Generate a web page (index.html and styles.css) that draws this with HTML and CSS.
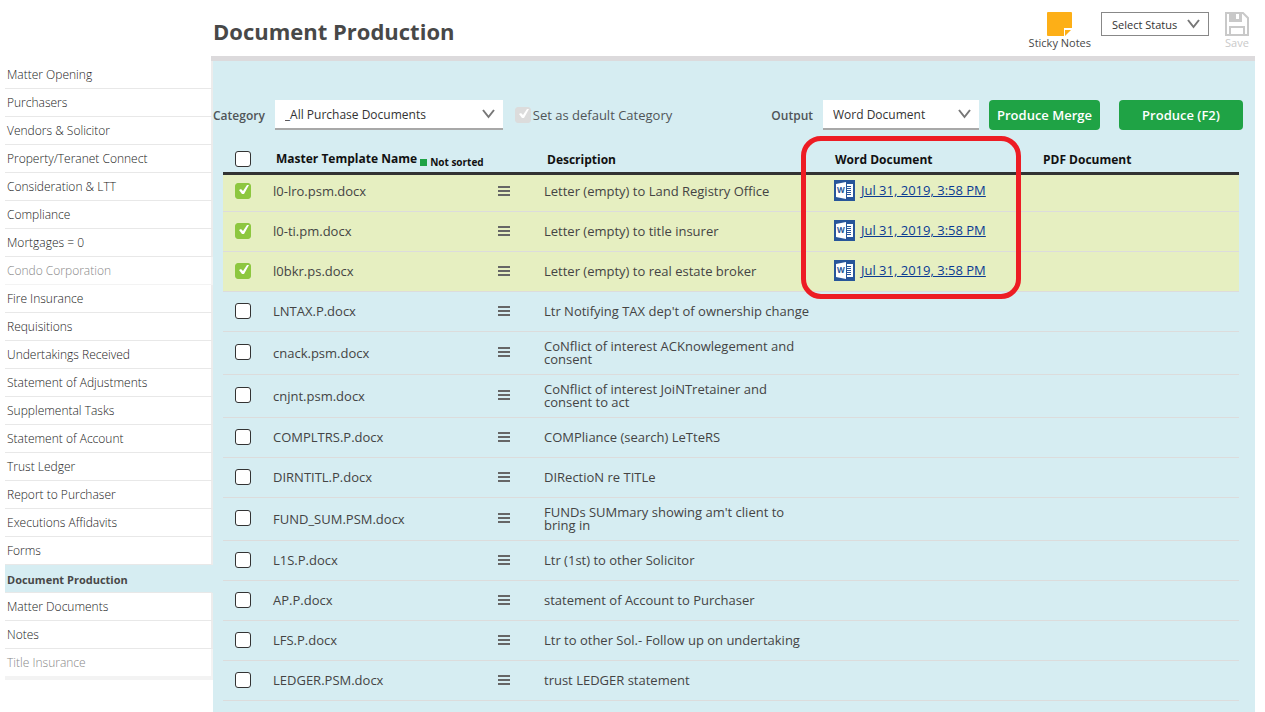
FILE: index.html
```
<!DOCTYPE html>
<html lang="en">

<head>
    <meta charset="UTF-8" />
    <meta name="viewport" content="width=device-width, initial-scale=1.0" />
    <title>Document Production</title>
    <link rel="stylesheet" href="styles.css">
</head>

<body>

    <svg class="sprite" aria-hidden="true">
        <symbol id="icon-menu" viewBox="0 0 12 10">
            <path d="M0 0h12v2H0zM0 4h12v2H0zM0 8h12v2H0z" fill="#666" />
        </symbol>
        <symbol id="icon-word" viewBox="0 0 21 21">
            <path d="M0 0h21v21H0z" fill="#28569a" />
            <path d="M11 4h8v13h-8z" fill="#fff" />
            <path d="M12 6.500h5M12 8.500h5M12 10.500h5M12 12.500h5M12 14.500h5" stroke="#28569a" />
            <path d="M2 4l10-2v17l-10-2z" fill="#fff" />
            <path d="M12.500 4v13" stroke="#28569a" />
            <text x="3" y="13" class="word-letter">W</text>
        </symbol>
    </svg>

    <header class="top">
        <h1 class="title">Document Production</h1>
        <div class="tools">
            <button type="button" class="tool">
                <svg width="25" height="24" viewBox="0 0 25 24" aria-hidden="true">
                    <path d="M1 0h23q1 0 1 1v15h-8v8H1q-1 0-1-1V1q0-1 1-1z" fill="#fdaf17" />
                    <path d="M18 18h6l-6 6z" fill="#fdaf17" />
                </svg>
                Sticky Notes
            </button>
            <select class="status" aria-label="Status">
                <option>Select Status</option>
            </select>
            <button type="button" class="tool tool-save" disabled>
                <svg width="24" height="24" viewBox="0 0 24 24" fill="none" stroke="#c9c9c9" stroke-width="2" aria-hidden="true">
                    <path d="M1 1h17l5 5v17H1z" />
                    <path d="M5 23v-8h14v8" />
                    <path d="M4 0h13v10H4zM11 2v5h3V2z" fill="#c9c9c9" fill-rule="evenodd" stroke="none" />
                </svg>
                Save
            </button>
        </div>
    </header>

    <div class="layout">
        <nav class="side">
            <a href="#">Matter Opening</a>
            <a href="#">Purchasers</a>
            <a href="#">Vendors &amp; Solicitor</a>
            <a href="#">Property/Teranet Connect</a>
            <a href="#">Consideration &amp; LTT</a>
            <a href="#">Compliance</a>
            <a href="#">Mortgages = 0</a>
            <a href="#" class="off">Condo Corporation</a>
            <a href="#">Fire Insurance</a>
            <a href="#">Requisitions</a>
            <a href="#">Undertakings Received</a>
            <a href="#">Statement of Adjustments</a>
            <a href="#">Supplemental Tasks</a>
            <a href="#">Statement of Account</a>
            <a href="#">Trust Ledger</a>
            <a href="#">Report to Purchaser</a>
            <a href="#">Executions Affidavits</a>
            <a href="#">Forms</a>
            <a href="#" class="active">Document Production</a>
            <a href="#">Matter Documents</a>
            <a href="#">Notes</a>
            <a href="#" class="off">Title Insurance</a>
        </nav>

        <main class="panel">
            <form class="controls">
                <label for="category" class="control-label">Category</label>
                <select id="category" class="drop drop-category">
                    <option>_All Purchase Documents</option>
                </select>
                <input type="checkbox" id="default-cat" class="check" checked disabled>
                <label for="default-cat" class="check-label">Set as default Category</label>
                <label for="output" class="control-label control-output">Output</label>
                <select id="output" class="drop drop-output">
                    <option>Word Document</option>
                </select>
                <button type="button" class="bttn">Produce Merge</button>
                <button type="button" class="bttn bttn-wide">Produce (F2)</button>
            </form>

            <div class="table-wrap">
                <table class="docs">
                    <colgroup>
                        <col class="col-check">
                        <col class="col-name">
                        <col class="col-menu">
                        <col class="col-desc">
                        <col class="col-word">
                        <col>
                    </colgroup>
                    <thead>
                        <tr>
                            <th><input type="checkbox" class="check" aria-label="Select all"></th>
                            <th colspan="2">Master Template Name <span class="sort">Not sorted</span></th>
                            <th>Description</th>
                            <th class="word-head">Word Document</th>
                            <th>PDF Document</th>
                        </tr>
                    </thead>
                    <tbody>
                        <tr class="picked">
                            <td><input type="checkbox" class="check" aria-label="l0-lro.psm.docx" checked></td>
                            <td>l0-lro.psm.docx</td>
                            <td><button type="button" class="menu" aria-label="Menu"><svg width="12" height="10"><use href="#icon-menu" /></svg></button></td>
                            <td>Letter (empty) to Land Registry Office</td>
                            <td><a href="#" class="doc"><svg width="21" height="21"><use href="#icon-word" /></svg><span>Jul 31, 2019, 3:58 PM</span></a></td>
                            <td></td>
                        </tr>
                        <tr class="picked">
                            <td><input type="checkbox" class="check" aria-label="l0-ti.pm.docx" checked></td>
                            <td>l0-ti.pm.docx</td>
                            <td><button type="button" class="menu" aria-label="Menu"><svg width="12" height="10"><use href="#icon-menu" /></svg></button></td>
                            <td>Letter (empty) to title insurer</td>
                            <td><a href="#" class="doc"><svg width="21" height="21"><use href="#icon-word" /></svg><span>Jul 31, 2019, 3:58 PM</span></a></td>
                            <td></td>
                        </tr>
                        <tr class="picked">
                            <td><input type="checkbox" class="check" aria-label="l0bkr.ps.docx" checked></td>
                            <td>l0bkr.ps.docx</td>
                            <td><button type="button" class="menu" aria-label="Menu"><svg width="12" height="10"><use href="#icon-menu" /></svg></button></td>
                            <td>Letter (empty) to real estate broker</td>
                            <td><a href="#" class="doc"><svg width="21" height="21"><use href="#icon-word" /></svg><span>Jul 31, 2019, 3:58 PM</span></a></td>
                            <td></td>
                        </tr>
                        <tr>
                            <td><input type="checkbox" class="check" aria-label="LNTAX.P.docx"></td>
                            <td>LNTAX.P.docx</td>
                            <td><button type="button" class="menu" aria-label="Menu"><svg width="12" height="10"><use href="#icon-menu" /></svg></button></td>
                            <td>Ltr Notifying TAX dep't of ownership change</td>
                            <td></td>
                            <td></td>
                        </tr>
                        <tr>
                            <td><input type="checkbox" class="check" aria-label="cnack.psm.docx"></td>
                            <td>cnack.psm.docx</td>
                            <td><button type="button" class="menu" aria-label="Menu"><svg width="12" height="10"><use href="#icon-menu" /></svg></button></td>
                            <td>CoNflict of interest ACKnowlegement and consent</td>
                            <td></td>
                            <td></td>
                        </tr>
                        <tr>
                            <td><input type="checkbox" class="check" aria-label="cnjnt.psm.docx"></td>
                            <td>cnjnt.psm.docx</td>
                            <td><button type="button" class="menu" aria-label="Menu"><svg width="12" height="10"><use href="#icon-menu" /></svg></button></td>
                            <td>CoNflict of interest JoiNTretainer and consent to act</td>
                            <td></td>
                            <td></td>
                        </tr>
                        <tr>
                            <td><input type="checkbox" class="check" aria-label="COMPLTRS.P.docx"></td>
                            <td>COMPLTRS.P.docx</td>
                            <td><button type="button" class="menu" aria-label="Menu"><svg width="12" height="10"><use href="#icon-menu" /></svg></button></td>
                            <td>COMPliance (search) LeTteRS</td>
                            <td></td>
                            <td></td>
                        </tr>
                        <tr>
                            <td><input type="checkbox" class="check" aria-label="DIRNTITL.P.docx"></td>
                            <td>DIRNTITL.P.docx</td>
                            <td><button type="button" class="menu" aria-label="Menu"><svg width="12" height="10"><use href="#icon-menu" /></svg></button></td>
                            <td>DIRectioN re TITLe</td>
                            <td></td>
                            <td></td>
                        </tr>
                        <tr>
                            <td><input type="checkbox" class="check" aria-label="FUND_SUM.PSM.docx"></td>
                            <td>FUND_SUM.PSM.docx</td>
                            <td><button type="button" class="menu" aria-label="Menu"><svg width="12" height="10"><use href="#icon-menu" /></svg></button></td>
                            <td>FUNDs SUMmary showing am't client to bring in</td>
                            <td></td>
                            <td></td>
                        </tr>
                        <tr>
                            <td><input type="checkbox" class="check" aria-label="L1S.P.docx"></td>
                            <td>L1S.P.docx</td>
                            <td><button type="button" class="menu" aria-label="Menu"><svg width="12" height="10"><use href="#icon-menu" /></svg></button></td>
                            <td>Ltr (1st) to other Solicitor</td>
                            <td></td>
                            <td></td>
                        </tr>
                        <tr>
                            <td><input type="checkbox" class="check" aria-label="AP.P.docx"></td>
                            <td>AP.P.docx</td>
                            <td><button type="button" class="menu" aria-label="Menu"><svg width="12" height="10"><use href="#icon-menu" /></svg></button></td>
                            <td>statement of Account to Purchaser</td>
                            <td></td>
                            <td></td>
                        </tr>
                        <tr>
                            <td><input type="checkbox" class="check" aria-label="LFS.P.docx"></td>
                            <td>LFS.P.docx</td>
                            <td><button type="button" class="menu" aria-label="Menu"><svg width="12" height="10"><use href="#icon-menu" /></svg></button></td>
                            <td>Ltr to other Sol.- Follow up on undertaking</td>
                            <td></td>
                            <td></td>
                        </tr>
                        <tr>
                            <td><input type="checkbox" class="check" aria-label="LEDGER.PSM.docx"></td>
                            <td>LEDGER.PSM.docx</td>
                            <td><button type="button" class="menu" aria-label="Menu"><svg width="12" height="10"><use href="#icon-menu" /></svg></button></td>
                            <td>trust LEDGER statement</td>
                            <td></td>
                            <td></td>
                        </tr>
                    </tbody>
                </table>
                <div class="highlight"></div>
            </div>
        </main>
    </div>

</body>

</html>
```
FILE: styles.css
```
* {
    box-sizing: border-box;
}

body {
    margin: 0;
    min-height: 100vh;
    display: flex;
    flex-direction: column;
    background-color: #fff;
    color: #444;
    font-family: "Open Sans", sans-serif;
    font-size: 13px;
}

button,
select,
input {
    font-family: inherit;
    margin: 0;
}

.sprite {
    display: none;
}

/* header */

.top {
    display: flex;
    justify-content: space-between;
    height: 61px;
    margin: 0 10px 0 211px;
    padding: 12px 6px 0 2px;
    border-bottom: 5px solid #dcdadc;
}

.title {
    margin: 0;
    font-size: 22px;
    line-height: 38px;
    font-weight: 700;
    color: #484848;
}

.tools {
    display: flex;
    align-items: flex-start;
    gap: 10px;
}

.tool {
    display: flex;
    flex-direction: column;
    align-items: center;
    padding: 0;
    border: 0;
    background: none;
    font-size: 11px;
    line-height: 14px;
    color: #484848;
}

.tool-save {
    margin-left: 6px;
    color: #c9c9c9;
}

.status,
.drop {
    appearance: none;
    border-radius: 0;
    color: #333;
    background: #fff url("data:image/svg+xml,%3Csvg xmlns='http://www.w3.org/2000/svg' width='13' height='10'%3E%3Cpath d='M1 1l5.500 7 5.500-7' fill='none' stroke='%23777' stroke-width='2'/%3E%3C/svg%3E") no-repeat right 8px center;
}

.status {
    width: 108px;
    height: 24px;
    padding: 0 10px;
    border: 1px solid #888;
    font-size: 11px;
}

/* side menu */

.layout {
    display: flex;
    flex: 1;
    padding: 0 10px 0 5px;
}

.side {
    width: 208px;
    flex-shrink: 0;
}

.side a {
    display: block;
    height: 28px;
    padding-left: 2px;
    border-right: 2px solid #ececec;
    border-bottom: 1px solid #e8e8e8;
    font-size: 12px;
    line-height: 28px;
    font-weight: 300;
    color: #222;
    text-decoration: none;
}

.side .off {
    color: #888;
    border-color: #f3f3f3;
}

.side .active {
    background-color: #d6edf2;
    border-right-color: #d6edf2;
    font-size: 11px;
    line-height: 30px;
    font-weight: 700;
    color: #484848;
}

.side a:last-child {
    height: 31px;
    border-bottom-width: 4px;
}

/* panel */

.panel {
    flex: 1;
    min-width: 0;
    padding-top: 39px;
    background-color: #d6edf2;
}

.controls {
    display: flex;
    align-items: center;
    height: 30px;
    padding-right: 12px;
}

.control-label {
    margin-right: 10px;
    font-size: 12px;
    font-weight: 600;
    color: #505558;
}

.control-output {
    margin-left: auto;
}

.drop {
    height: 30px;
    padding: 0 10px;
    border: 0;
    border-bottom: 2px solid #a8a8a8;
    font-size: 12px;
}

.drop-category {
    width: 228px;
    margin-right: 12px;
}

.drop-output {
    width: 156px;
    margin-right: 10px;
}

.check-label {
    margin-left: 2px;
    color: #505558;
}

.check {
    appearance: none;
    display: block;
    width: 16px;
    height: 16px;
    border: 1px solid #333;
    border-radius: 3px;
    background-color: #fff;
}

.check:checked {
    border-color: #8dc73f;
    background: #8dc73f url("data:image/svg+xml,%3Csvg xmlns='http://www.w3.org/2000/svg' width='14' height='14'%3E%3Cpath d='M3 6l2-1 2 2 4-6h2L8 10H6z' fill='%23fff'/%3E%3C/svg%3E") no-repeat center;
}

.check:disabled {
    border-color: #dcdcdc;
    background-color: #dcdcdc;
}

.bttn {
    height: 30px;
    width: 111px;
    padding: 0;
    border: 0;
    border-radius: 4px;
    background-color: #1fa345;
    color: #fff;
    font-size: 13px;
    font-weight: 600;
}

.bttn-wide {
    width: 124px;
    margin-left: 19px;
}

/* documents */

.table-wrap {
    position: relative;
    margin: 14px 16px 0 10px;
}

.docs {
    width: 100%;
    table-layout: fixed;
    border-collapse: separate;
    border-spacing: 0;
}

.col-check {
    width: 42px;
}

.col-name {
    width: 225px;
}

.col-menu {
    width: 46px;
}

.col-desc {
    width: 290px;
}

.col-word {
    width: 206px;
}

.docs th {
    height: 31px;
    padding: 2px 11px 0;
    border-bottom: 3px solid #333;
    text-align: left;
    font-size: 12px;
    font-weight: 700;
    color: #111;
}

.docs td {
    height: 40px;
    padding: 7px 12px 9px 8px;
    border-bottom: 1px solid #dcdcdc;
    line-height: 13px;
}

.docs td:nth-child(2),
.docs td:nth-child(4) {
    padding-top: 8px;
    padding-bottom: 8px;
}

.docs th:first-child,
.docs td:first-child {
    padding-left: 12px;
}

.docs .word-head {
    padding-left: 9px;
}

.picked td {
    background-color: #e6efc1;
}

.docs tbody tr:first-child td {
    height: 37px;
    padding-top: 4px;
}

.sort {
    font-size: 10px;
    line-height: 12px;
    vertical-align: sub;
}

.sort::before {
    content: "";
    display: inline-block;
    width: 7px;
    height: 7px;
    margin-right: 3px;
    background-color: #1fa345;
}

.menu {
    display: block;
    padding: 0;
    border: 0;
    background: none;
}

.menu svg {
    display: block;
}

.doc {
    display: flex;
    align-items: center;
    gap: 6px;
    color: #0b3a93;
}

.word-letter {
    font-family: "Open Sans", sans-serif;
    font-size: 8px;
    font-weight: 700;
    fill: #28569a;
}

.highlight {
    position: absolute;
    top: -8px;
    left: 578px;
    width: 220px;
    height: 163px;
    border: 5px solid #ed1c24;
    border-radius: 20px;
    pointer-events: none;
}
```
